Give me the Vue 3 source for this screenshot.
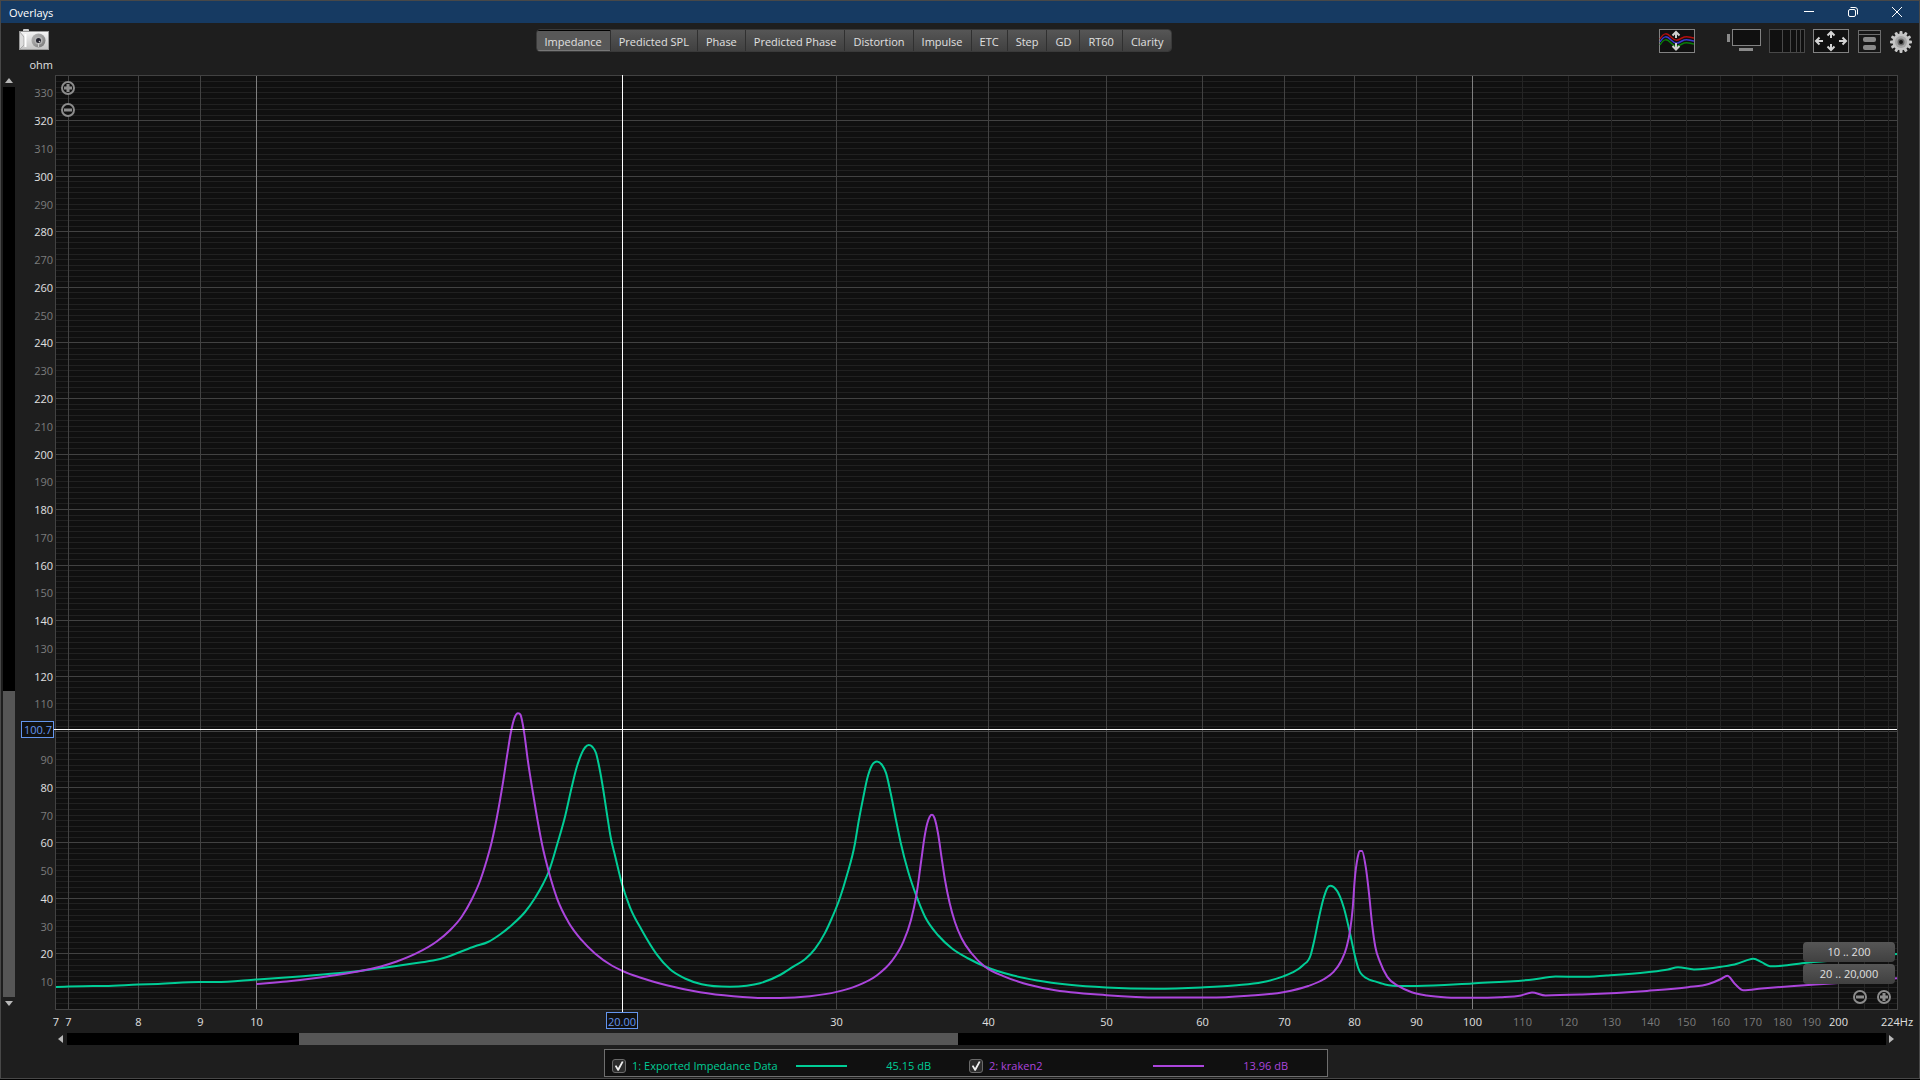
<script setup>
import { ref } from 'vue'

const tabs = ['Impedance', 'Predicted SPL', 'Phase', 'Predicted Phase', 'Distortion', 'Impulse', 'ETC', 'Step', 'GD', 'RT60', 'Clarity']
const active = ref('Impedance')

// Drawing space of the plot: logarithmic frequency, linear impedance
const view = { x: 55, y: 75, w: 1843, h: 935 }
const snap = (n) => Math.floor(n) + 0.5
const fx = (f) => snap(256.5 + 1216 * Math.log10(f / 10))
const oy = (v) => snap(1009.5 - 2.7775 * v)
const px = (x) => ((x - view.x) / view.w) * 100 + '%'
const py = (y) => ((y - view.y) / view.h) * 100 + '%'

const hLines = Array.from({ length: 167 }, (_, i) => (i + 1) * 2).map((v) => ({ y: oy(v), major: v % 20 === 0 }))
const vLines = [
  ...[110, 120, 130, 140, 150, 160, 170, 180, 190, 210, 220].map((f) => ({ x: fx(f), cls: 'minor' })),
  ...[7, 8, 9, 30, 40, 50, 60, 70, 80, 90, 200].map((f) => ({ x: fx(f), cls: 'major' })),
  ...[10, 100].map((f) => ({ x: fx(f), cls: 'decade' })),
]

const yLabels = Array.from({ length: 33 }, (_, i) => (i + 1) * 10)
  .filter((v) => v !== 100)
  .map((v) => ({ v, y: py(oy(v)), dim: v % 20 !== 0 }))
const xLabels = [
  { t: '7', x: px(56) },
  ...[7, 8, 9, 10, 30, 40, 50, 60, 70, 80, 90, 100, 110, 120, 130, 140, 150, 160, 170, 180, 190, 200].map((f) => ({
    t: String(f),
    x: px(fx(f)),
    dim: f > 100 && f < 200,
  })),
  { t: '224Hz', x: px(1897) },
]

const green = [
  [56, 987], [93, 986], [105, 986], [138, 984.5], [158, 984], [199, 982], [216, 982], [256, 979.5], [303, 976.2], [337, 973.3],
  [363, 970.5], [393, 966.5], [420, 962.5], [433, 960.6], [447, 957], [460, 952], [475, 946.3], [488, 942], [500, 934.5],
  [513, 924], [525, 912], [535, 898], [543, 884], [549, 871], [557.3, 844], [565, 816.7], [571.7, 787.3], [576.7, 767.3],
  [581.7, 753.3], [585, 747.5], [588.7, 745], [592.3, 746.8], [596, 753], [599.3, 767.3], [603.3, 790], [606.7, 812.3],
  [610.7, 837.3], [615.3, 856.7], [622.3, 885], [630, 907.3], [641.7, 930], [656.7, 954.3], [670, 969.3], [685, 978.5],
  [701.7, 984.3], [730, 986.8], [746.7, 985.7], [760, 983.2], [780, 975], [793.3, 966.7], [805, 959.3], [815, 948.9],
  [825, 932.9], [831.7, 918.5], [840, 897.7], [846.7, 876], [855, 843.3], [858.3, 823.3], [863.3, 797.3], [867.3, 778.3],
  [871.7, 765.7], [877, 761.5], [882, 764.9], [886, 772.9], [890.7, 793.3], [896, 820], [900.7, 842.7], [908.3, 872],
  [916.3, 895.7], [925, 916.7], [938.3, 935.5], [951.7, 948.2], [968.3, 958.5], [986.7, 967.2], [1013.3, 975.5],
  [1037, 980.4], [1069.3, 984.7], [1106.4, 987.4], [1155, 988.7], [1201.4, 987.4], [1237, 985.2], [1262, 982.2],
  [1283.3, 976.4], [1292, 972.7], [1303.3, 965], [1310.7, 955], [1314, 941.7], [1319.3, 916], [1323.3, 899.3],
  [1327.7, 887.3], [1330.7, 885.8], [1334.3, 887.6], [1340, 896.7], [1344, 908.3], [1350, 933.3], [1354.7, 955],
  [1358.3, 968.3], [1366.7, 978.3], [1375, 981.4], [1385, 984.4], [1403.3, 986], [1416.7, 986], [1472, 983.4],
  [1533, 979.5], [1555.5, 976.6], [1582, 976.8], [1606.5, 975.4], [1647, 972.2], [1668, 969.5], [1678, 967.2],
  [1694, 969.4], [1721, 966.8], [1737, 963.8], [1746.5, 960.4], [1753.5, 958.8], [1761.6, 962.2], [1770, 966.2],
  [1782, 965.8], [1802, 963.3], [1851, 959], [1897, 954],
]
const purple = [
  [256.3, 984], [286.7, 981.4], [320, 977.5], [353.3, 972.3], [380, 966.7], [396.7, 961.5], [416.7, 953.2], [436.7, 941.5],
  [450, 930.2], [461.7, 916.7], [471.7, 899.5], [480, 881], [486.5, 861], [491.7, 842], [496.7, 818.3], [502.3, 786.7],
  [507.7, 751.7], [510.7, 733.3], [514.7, 717.3], [518, 713.2], [520.5, 714.8], [524, 731.7], [528, 761.7], [533.3, 795],
  [538.3, 824.5], [542.2, 845], [549, 872.5], [557, 898.3], [568.3, 921.9], [581.7, 940.2], [595, 953.5], [611.7, 965.5],
  [622.3, 970.8], [640, 977.5], [666.7, 985.2], [700, 992.2], [733.3, 996.2], [765, 998], [780, 998], [810, 996.2],
  [836.7, 991.9], [856.7, 985.9], [876.7, 975.5], [891.7, 961.2], [903.3, 941.9], [911, 920], [916.3, 895.7],
  [921.3, 860], [924.3, 838.3], [927.3, 823.3], [929.7, 816.7], [932, 814.8], [934.3, 817.5], [938, 833.3],
  [941.7, 858.3], [945, 880], [949.7, 903.3], [955, 922.3], [961.7, 938.5], [971.7, 953.5], [985, 966.7], [1003.3, 976.2],
  [1023.3, 983.2], [1051, 989.5], [1106.4, 995.2], [1158.6, 997.6], [1208.6, 997.6], [1247.9, 995.7], [1283.2, 992.2],
  [1308.3, 986], [1323.3, 979.5], [1333.3, 972.2], [1341, 961.2], [1346.7, 946.7], [1350, 931], [1352.7, 908.3],
  [1354.7, 880], [1357.7, 857.3], [1359.7, 850.9], [1362, 850.9], [1365.7, 866.7], [1369, 893.3], [1372, 923.3],
  [1375.3, 946.7], [1380, 961.9], [1387.3, 976.9], [1398.3, 985.9], [1411.7, 992.2], [1426.7, 995.5], [1446.7, 997.4],
  [1470, 997.8], [1500, 997.2], [1521, 995.4], [1532, 992.5], [1545.5, 995.4], [1582, 994.5], [1647, 990.9], [1688, 987.2],
  [1708.6, 984], [1721, 979], [1727.3, 975.8], [1735, 984], [1743.3, 990.2], [1761.6, 988.5], [1794, 985.9],
  [1835, 983.3], [1897, 978.3],
]

// Monotone cubic interpolation through the measured points
function smooth(p) {
  const n = p.length
  const slope = []
  for (let i = 0; i < n - 1; i++) slope.push((p[i + 1][1] - p[i][1]) / (p[i + 1][0] - p[i][0]))
  const m = p.map((_, i) => {
    if (i === 0) return slope[0]
    if (i === n - 1) return slope[n - 2]
    const a = slope[i - 1]
    const b = slope[i]
    if (a * b <= 0) return 0
    const h0 = p[i][0] - p[i - 1][0]
    const h1 = p[i + 1][0] - p[i][0]
    const mid = (a * h1 + b * h0) / (h0 + h1)
    return Math.sign(a) * Math.min(Math.abs(mid), 3 * Math.abs(a), 3 * Math.abs(b))
  })
  let d = `M${p[0][0]},${p[0][1]}`
  for (let i = 0; i < n - 1; i++) {
    const h = (p[i + 1][0] - p[i][0]) / 3
    d += `C${p[i][0] + h},${p[i][1] + m[i] * h} ${p[i + 1][0] - h},${p[i + 1][1] - m[i + 1] * h} ${p[i + 1][0]},${p[i + 1][1]}`
  }
  return d
}

const series = ref([
  { id: 'green', name: '1: Exported Impedance Data', value: '45.15 dB', d: smooth(green), on: true },
  { id: 'purple', name: '2: kraken2', value: '13.96 dB', d: smooth(purple), on: true },
])

const teeth = Array.from({ length: 12 }, (_, i) => i * 30)
</script>

<template>
  <div class="window">
    <header class="titlebar">
      <span class="title">Overlays</span>
      <div class="winctl">
        <button aria-label="Minimize"><svg width="12" height="12"><path d="M1 5.5h10" /></svg></button>
        <button aria-label="Restore">
          <svg width="12" height="12"><rect x="1.5" y="3.5" width="7" height="7" rx="1.5" /><path d="M3.5 1.5h4.5a2.5 2.5 0 0 1 2.5 2.5v4.5" /></svg>
        </button>
        <button aria-label="Close"><svg width="12" height="12"><path d="M1 1l10 10M11 1L1 11" /></svg></button>
      </div>
    </header>

    <div class="toolbar">
      <div class="corner">
        <button class="icon" aria-label="Capture">
          <svg width="30" height="22" viewBox="0 0 30 22">
            <defs>
              <linearGradient id="body" x1="0" y1="0" x2="0" y2="1"><stop offset="0" stop-color="#f4f4f4" /><stop offset="1" stop-color="#c4c4c4" /></linearGradient>
              <linearGradient id="ring" x1="0" y1="0" x2="1" y2="1"><stop offset="0" stop-color="#bbb" /><stop offset="1" stop-color="#777" /></linearGradient>
            </defs>
            <rect x="4" y="0" width="6" height="3" rx="1" fill="#cfcfcf" />
            <rect x="0.5" y="2.5" width="29" height="18" fill="url(#body)" stroke="#999" />
            <path d="M1 3l4 5v8l-4 4" fill="#ddd" stroke="#aaa" />
            <path d="M6.5 5v13" stroke="#fff" stroke-width="2" />
            <circle cx="19.5" cy="11.5" r="7" fill="url(#ring)" />
            <circle cx="19.5" cy="11.5" r="4" fill="#b4b4b4" />
            <circle cx="19.5" cy="11.5" r="2.5" fill="#23232e" />
            <path d="M19.5 14v4" stroke="#ccc" />
            <circle cx="20.5" cy="12.5" r="0.8" fill="#ccc" />
          </svg>
        </button>
        <span class="unit">ohm</span>
      </div>

      <nav class="tabs">
        <button v-for="t in tabs" :key="t" :class="{ active: t === active }" @click="active = t">{{ t }}</button>
      </nav>

      <div class="tools">
        <button class="icon" aria-label="Separate traces">
          <svg width="36" height="24" fill="none">
            <rect x="0.5" y="0.5" width="35" height="23" fill="#101010" stroke="#828282" />
            <path d="M1 10C5 3 8 4 12 8s6 4 11 1 8 0 12 0" stroke="#b00e0e" stroke-width="1.5" />
            <path d="M1 13C5 6 8 7 12 11s6 4 11 1 8 0 12 0" stroke="#3a3ad0" stroke-width="1.5" />
            <path d="M1 16C5 9 8 10 12 14s6 4 11 1 8 0 12 0" stroke="#0a7d0a" stroke-width="1.5" />
            <path d="M17 9V4M13.5 6.5L17 3l3.5 3.5M17 14v6M13.5 17l3.500 3.500L20.5 17" stroke="#d0d0d0" stroke-width="2" />
          </svg>
        </button>
        <button class="icon screen" aria-label="Full screen">
          <svg width="34" height="24">
            <rect x="0" y="5" width="3" height="8" fill="#8a8a8a" />
            <rect x="5.5" y="0.5" width="28" height="16" fill="#101010" stroke="#828282" />
            <rect x="12" y="19" width="14" height="3" fill="#8a8a8a" />
          </svg>
        </button>
        <button class="icon" aria-label="Log axis">
          <svg width="36" height="24">
            <rect x="0.5" y="0.5" width="35" height="23" fill="#101010" stroke="#484848" />
            <path d="M13.5 1v22M21.5 1v22M27.5 1v22M31.5 1v22" stroke="#484848" />
          </svg>
        </button>
        <button class="icon" aria-label="Fit to data">
          <svg width="36" height="24" fill="none">
            <rect x="0.5" y="0.5" width="35" height="23" fill="#101010" stroke="#828282" />
            <path d="M18 9V4M14.5 6.5L18 3l3.5 3.5M18 15v5M14.5 17.5L18 21l3.5-3.5M10 12H4M6.5 8.5L3 12l3.5 3.5M26 12h6M29.5 8.5L33 12l-3.5 3.5" stroke="#d4d4d4" stroke-width="2" />
          </svg>
        </button>
        <button class="icon panel" aria-label="Graph panel">
          <svg width="23" height="23">
            <rect x="0.5" y="0.5" width="22" height="22" fill="#161616" stroke="#6c6c6c" />
            <path d="M1 4.5h21" stroke="#6c6c6c" />
            <rect x="5" y="7" width="13" height="5" rx="2" fill="#888" />
            <rect x="5" y="15" width="13" height="5" rx="2" fill="#888" />
          </svg>
        </button>
        <button class="icon gear" aria-label="Settings">
          <svg width="22" height="22" viewBox="-11 -11 22 22">
            <rect v-for="a in teeth" :key="a" x="-1.5" y="-11" width="3" height="6" rx="1" fill="#c8c8c8" :transform="`rotate(${a})`" />
            <circle r="8.5" fill="#c4c4c4" />
            <circle r="6" fill="#a4a4a4" />
            <circle r="3.5" fill="#686868" />
            <circle r="2" fill="#141414" />
          </svg>
        </button>
      </div>
    </div>

    <main class="graph">
      <div class="vscroll">
        <button class="arrow" aria-label="Scroll up"><svg width="8" height="5"><path d="M0 5L4 0l4 5z" /></svg></button>
        <div class="track"><div class="thumb"></div></div>
        <button class="arrow" aria-label="Scroll down"><svg width="8" height="5"><path d="M0 0l4 5 4-5z" /></svg></button>
      </div>

      <svg class="axis yaxis" width="40" height="100%">
        <text v-for="l in yLabels" :key="l.v" x="38" :y="l.y" dy="4" :class="{ dim: l.dim }">{{ l.v }}</text>
        <svg :y="py(721)" class="free">
          <rect x="6.5" y="0.5" width="32" height="16" class="cursor-box" />
          <text x="37" y="13" class="cursor">100.7</text>
        </svg>
      </svg>

      <div class="plot">
        <svg class="canvas" width="100%" height="100%" :viewBox="`${view.x} ${view.y} ${view.w} ${view.h}`" preserveAspectRatio="none">
          <g class="grid">
            <line v-for="l in hLines" :key="'h' + l.y" x1="55" x2="1897" :y1="l.y" :y2="l.y" :class="l.major ? 'major' : 'fine'" />
            <line v-for="l in vLines" :key="'v' + l.x" :x1="l.x" :x2="l.x" y1="76" y2="1009" :class="l.cls" />
            <rect x="55.5" y="75.5" width="1842" height="934" class="frame" />
          </g>
          <template v-for="s in series" :key="s.id">
            <path v-if="s.on" :d="s.d" :class="['trace', s.id]" />
          </template>
          <g class="crosshair">
            <line x1="54" x2="1897" y1="729.5" y2="729.5" />
            <line x1="622.5" x2="622.5" y1="75" y2="1012" />
          </g>
        </svg>

        <div class="zoom-y">
          <button class="round" aria-label="Zoom in vertically"><svg width="14" height="14"><circle cx="7" cy="7" r="6" /><path d="M7 3v8M3 7h8" /></svg></button>
          <button class="round" aria-label="Zoom out vertically"><svg width="14" height="14"><circle cx="7" cy="7" r="6" /><path d="M3 7h8" /></svg></button>
        </div>

        <div class="ranges">
          <button class="range">10 .. 200</button>
          <button class="range">20 .. 20,000</button>
          <div class="zoom-x">
            <button class="round" aria-label="Zoom out horizontally"><svg width="14" height="14"><circle cx="7" cy="7" r="6" /><path d="M3 7h8" /></svg></button>
            <button class="round" aria-label="Zoom in horizontally"><svg width="14" height="14"><circle cx="7" cy="7" r="6" /><path d="M7 3v8M3 7h8" /></svg></button>
          </div>
        </div>
      </div>
    </main>

    <div class="below">
      <svg class="axis xaxis" width="100%" height="23">
        <text v-for="(l, i) in xLabels" :key="i" :x="l.x" y="16" :class="{ dim: l.dim }">{{ l.t }}</text>
        <svg :x="px(622)" class="free">
          <rect x="-15.5" y="2.5" width="31" height="16" class="cursor-box" />
          <text x="0" y="16" class="cursor">20.00</text>
        </svg>
      </svg>
      <div class="hscroll">
        <button class="arrow" aria-label="Scroll left"><svg width="5" height="8"><path d="M5 0L0 4l5 4z" /></svg></button>
        <div class="track"><div class="thumb"></div></div>
        <button class="arrow" aria-label="Scroll right"><svg width="5" height="8"><path d="M0 0l5 4-5 4z" /></svg></button>
      </div>
    </div>

    <footer class="footer">
      <div class="legend">
        <div v-for="s in series" :key="s.id" :class="['entry', s.id]">
          <input :id="'show-' + s.id" v-model="s.on" type="checkbox" />
          <label :for="'show-' + s.id">{{ s.name }}</label>
          <span class="swatch"></span>
          <span class="value">{{ s.value }}</span>
        </div>
      </div>
    </footer>
  </div>
</template>

<style>
html,
body {
  margin: 0;
  background: #000;
}
</style>

<style scoped>
.window {
  box-sizing: border-box;
  display: flex;
  flex-direction: column;
  height: calc(100vh - 1px);
  min-height: 480px;
  border: 1px solid #484848;
  background: #1e1e1e;
  color: #e0e0e0;
  font: 11px/16px "Open Sans", "Noto Sans", sans-serif;
}
button {
  margin: 0;
  padding: 0;
  border: 0;
  background: none;
  color: inherit;
  font: inherit;
}
svg {
  display: block;
}
.titlebar {
  display: flex;
  flex: none;
  align-items: center;
  justify-content: space-between;
  height: 22px;
  padding: 0 16px 0 8px;
  background: #163a62;
  color: #fff;
}
.title {
  padding-top: 2px;
}
.winctl {
  display: flex;
  gap: 32px;
}
.winctl svg {
  fill: none;
  stroke: #fff;
}
.toolbar {
  display: flex;
  flex: none;
  justify-content: space-between;
  align-items: flex-start;
  height: 46px;
  padding: 6px 7px 0 0;
}
.corner {
  display: flex;
  flex-direction: column;
  align-items: flex-end;
  gap: 6px;
  width: 52px;
}
.corner .icon {
  margin-right: 4px;
}
.tabs {
  display: flex;
  height: 21px;
  border: 1px solid #3a3a3a;
  border-radius: 4px;
  overflow: hidden;
}
.tabs button {
  padding: 2px 8px 0;
  border-right: 1px solid #303030;
  background: linear-gradient(#565656, #404040);
}
.tabs button:last-child {
  border-right: 0;
}
.tabs .active {
  background: #585858;
  box-shadow: inset 0 1px #000, inset 0 -1px #777;
}
.tools {
  display: flex;
  padding-left: 4px;
}
.tools .icon {
  height: 24px;
  margin-right: 8px;
}
.tools .screen {
  margin-left: 24px;
}
.tools .panel,
.tools .gear {
  padding-top: 1px;
  margin-left: 1px;
}
.tools .gear {
  margin-right: 0;
}
.graph {
  display: grid;
  flex: 1;
  grid-template-columns: 14px 40px minmax(0, 1fr) 21px;
  grid-template-rows: minmax(0, 1fr);
  min-height: 0;
}
.vscroll {
  display: flex;
  flex-direction: column;
  padding-left: 2px;
}
.arrow {
  display: flex;
  box-sizing: border-box;
  flex: none;
  align-items: center;
  justify-content: center;
  height: 12px;
}
.arrow svg {
  fill: #b8b8b8;
}
.vscroll .arrow {
  padding-bottom: 2px;
}
.track {
  display: flex;
  flex: 1;
  background: #000;
}
.vscroll .track {
  flex-direction: column;
  justify-content: flex-end;
  margin-bottom: 1px;
}
.vscroll .thumb {
  height: 33.63%;
}
.thumb {
  background: #565656;
}
.axis {
  overflow: visible;
  fill: #e0e0e0;
}
.free {
  overflow: visible;
}
.yaxis text {
  text-anchor: end;
}
.xaxis text {
  text-anchor: middle;
}
.axis .dim {
  fill: #7c7c7c;
}
.cursor-box {
  fill: #101010;
  stroke: #6495ed;
}
.axis .cursor {
  fill: #6495ed;
}
.plot {
  position: relative;
  background: #101010;
}
.canvas {
  overflow: visible;
}
.grid line,
.grid rect,
.crosshair line {
  fill: none;
  shape-rendering: crispEdges;
  vector-effect: non-scaling-stroke;
}
.fine {
  stroke: #212121;
}
.minor {
  stroke: #242424;
}
.major,
.frame {
  stroke: #424242;
}
.decade {
  stroke: #808080;
}
.crosshair {
  stroke: #fff;
}
.trace {
  fill: none;
  stroke-width: 2;
  vector-effect: non-scaling-stroke;
}
.trace.green {
  stroke: #00cd96;
}
.trace.purple {
  stroke: #ab45dc;
}
.round svg {
  fill: none;
  stroke: #8c8c8c;
  stroke-width: 2;
}
.round circle {
  fill: #101010;
}
.round path {
  stroke-width: 3;
}
.zoom-y {
  position: absolute;
  top: 6px;
  left: 6px;
  display: flex;
  flex-direction: column;
  gap: 8px;
}
.ranges {
  position: absolute;
  right: 3px;
  bottom: 6px;
  display: flex;
  flex-direction: column;
  gap: 2px;
  width: 92px;
}
.range {
  height: 20px;
  border-radius: 4px;
  background: linear-gradient(#565656, #404040);
}
.zoom-x {
  display: flex;
  justify-content: flex-end;
  gap: 10px;
  padding: 4px 4px 0 0;
}
.below {
  flex: none;
  margin: 0 21px 0 54px;
}
.hscroll {
  display: flex;
  height: 12px;
}
.hscroll .arrow {
  width: 12px;
  padding-right: 2px;
}
.hscroll .thumb {
  width: 36.25%;
  margin-left: 12.76%;
}
.footer {
  display: flex;
  flex: none;
  justify-content: center;
  height: 28px;
  padding: 4px 0 1px 12px;
}
.legend {
  box-sizing: border-box;
  display: flex;
  width: 724px;
  padding: 6px 1px 0 7px;
  border: 1px solid #6e6e6e;
  background: #101010;
}
.entry {
  display: flex;
  flex: 1;
  align-items: center;
  height: 20px;
}
.entry.green {
  color: #00cd96;
}
.entry.purple {
  color: #ab45dc;
}
.entry input {
  appearance: none;
  box-sizing: border-box;
  flex: none;
  width: 14px;
  height: 14px;
  margin: 0 6px 0 0;
  border: 1px solid #6a6a6a;
  border-radius: 3px;
  background: #2c2c2c;
}
.entry input:checked::before {
  content: "";
  display: block;
  width: 12px;
  height: 12px;
  background: #eee;
  clip-path: polygon(15% 50%, 28% 44%, 42% 66%, 74% 10%, 88% 14%, 48% 90%, 38% 90%);
}
.entry label {
  width: 164px;
  white-space: nowrap;
}
.swatch {
  width: 51px;
  height: 2px;
  background: currentColor;
}
.value {
  width: 84px;
  text-align: right;
}
</style>
